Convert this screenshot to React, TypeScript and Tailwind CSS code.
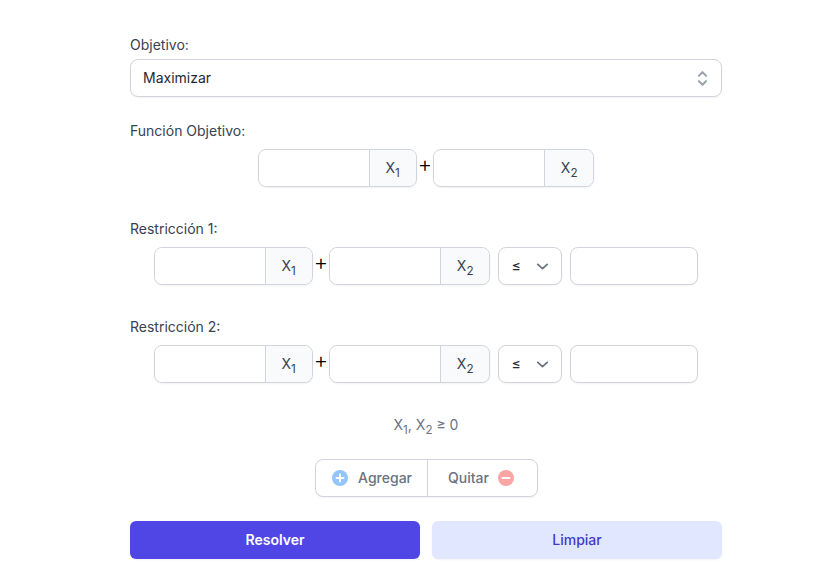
import React from 'react';

const font = { fontFamily: 'Inter, "Liberation Sans", sans-serif' };

const Sub: React.FC<{ children: React.ReactNode }> = ({ children }) => (
  <sub className="bottom-0 align-sub text-[11.67px]">{children}</sub>
);

const Variable: React.FC<{ index: number }> = ({ index }) => (
  <div className="flex items-stretch rounded-lg border border-[#d1d5db] shadow-[0_1px_2px_0_rgba(0,0,0,0.05)]">
    <input type="text" className="h-[36px] w-[110px] rounded-l-lg bg-white outline-none" />
    <div className="flex items-center rounded-r-lg border-l border-[#d1d5db] bg-[#f9fafb] px-4 text-sm text-[#374151]">
      <span className="whitespace-nowrap">
        X<Sub>{index}</Sub>
      </span>
    </div>
  </div>
);

const Plus: React.FC = () => (
  <span className="mb-2 flex w-4 justify-center text-[22px] font-light leading-none text-black">+</span>
);

const Constraint: React.FC<{ index: number }> = ({ index }) => (
  <div className="mt-[32px]">
    <label className="block h-5 text-sm leading-5 text-[#374151]">Restricción {index}:</label>
    <div className="mt-2 flex items-center justify-center">
      <Variable index={1} />
      <Plus />
      <Variable index={2} />
      <div className="ml-2 flex h-[38px] w-16 items-center justify-between rounded-lg border border-[#d1d5db] bg-white pl-3 pr-2 text-sm text-[#1f2937] shadow-[0_1px_2px_0_rgba(0,0,0,0.05)]">
        <span>≤</span>
        <svg viewBox="0 0 20 20" className="h-[21px] w-[21px] text-[#6b7280]" fill="none" stroke="currentColor" strokeWidth="1.7">
          <path d="M5.500 8l4.500 4 4.500-4" strokeLinecap="round" strokeLinejoin="round" />
        </svg>
      </div>
      <input type="text" className="ml-2 h-[38px] w-32 rounded-lg border border-[#d1d5db] bg-white shadow-[0_1px_2px_0_rgba(0,0,0,0.05)] outline-none" />
    </div>
  </div>
);

export default function App() {
  return (
    <div className="min-h-[582px] bg-white pl-[130px] pt-[35px]" style={font}>
      <div className="w-[592px]">
        <label className="block h-5 text-sm leading-5 text-[#374151]">Objetivo:</label>
        <div className="mt-1 flex h-[38px] items-center justify-between rounded-lg border border-[#d1d5db] bg-white pl-3 pr-2 text-sm text-[#1f2937] shadow-[0_1px_2px_0_rgba(0,0,0,0.05)]">
          <span>Maximizar</span>
          <svg viewBox="0 0 20 20" className="h-[21px] w-[21px] text-[#9ca3af]" fill="none" stroke="currentColor" strokeWidth="2">
            <path d="M6.500 7.500L10 4l3.500 3.500M6.500 12.500L10 16l3.500-3.500" strokeLinecap="round" strokeLinejoin="round" />
          </svg>
        </div>

        <div className="mt-[24px]">
          <label className="block h-5 text-sm leading-5 text-[#374151]">Función Objetivo:</label>
          <div className="mt-2 flex items-center justify-center">
            <Variable index={1} />
            <Plus />
            <Variable index={2} />
          </div>
        </div>

        <Constraint index={1} />
        <Constraint index={2} />

        <p className="mt-[32px] h-5 text-center text-sm leading-5 text-[#6b7280]">
          X<Sub>1</Sub>, X<Sub>2</Sub> ≥ 0
        </p>

        <div className="mt-6 flex justify-center pl-px">
          <div className="flex h-[38px] items-stretch rounded-lg border border-[#d1d5db] bg-white text-sm font-medium text-[#6b7280] shadow-[0_1px_2px_0_rgba(0,0,0,0.05)]">
            <button className="flex items-center gap-[10px] pl-4 pr-[15px]">
              <svg viewBox="0 0 16 16" className="h-4 w-4">
                <circle cx="8" cy="8" r="8" fill="#93c5fd" />
                <path d="M8 4.500v7M4.500 8h7" stroke="#fff" strokeWidth="2" strokeLinecap="round" />
              </svg>
              Agregar
            </button>
            <button className="flex items-center gap-[9px] border-l border-[#d1d5db] pl-5 pr-[23px]">
              Quitar
              <svg viewBox="0 0 16 16" className="h-4 w-4">
                <circle cx="8" cy="8" r="8" fill="#fca5a5" />
                <path d="M4.500 8h7" stroke="#fff" strokeWidth="2" strokeLinecap="round" />
              </svg>
            </button>
          </div>
        </div>

        <div className="mt-6 flex gap-3">
          <button className="h-[38px] flex-1 rounded-md bg-[#4f46e5] text-sm font-semibold text-white shadow-[0_1px_2px_0_rgba(0,0,0,0.05)]">Resolver</button>
          <button className="h-[38px] flex-1 rounded-md bg-[#e0e7ff] text-sm font-medium text-[#4338ca] shadow-[0_1px_2px_0_rgba(0,0,0,0.05)]">Limpiar</button>
        </div>
      </div>
    </div>
  );
}
